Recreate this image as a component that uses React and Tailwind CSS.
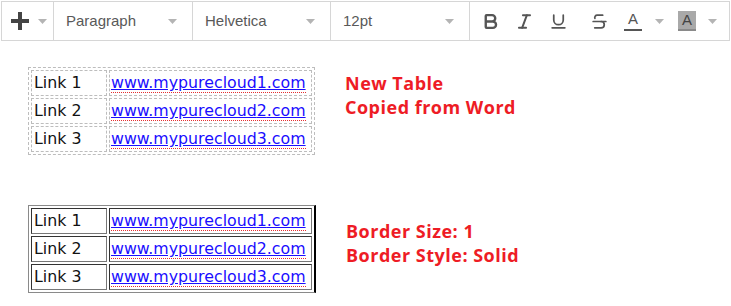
import { Bold, Italic, Underline, Strikethrough } from 'lucide-react';

const rows = [1, 2, 3];

function Caret() {
  return (
    <svg width="9" height="5" viewBox="0 0 9 5" className="shrink-0">
      <path d="M0 0h9L4.5 5z" fill="#b4b4b4" />
    </svg>
  );
}

function Select({ label, width }) {
  return (
    <div className={`flex items-center justify-between border-r border-[#d6d6d6] pl-3 pr-[15px] ${width}`}>
      <span className="text-[15px] text-[#595959]">{label}</span>
      <Caret />
    </div>
  );
}

function LinkTable({ solid }) {
  const tableCls = solid
    ? 'border border-t-[#8a8a8a] border-l-[#8a8a8a] border-b-[#8a8a8a] border-r-black border-r-2'
    : 'border border-dashed border-[#bdbdbd]';
  const cellCls = solid
    ? 'border border-t-[#333] border-l-[#333] border-r-[#777] border-b-[#777]'
    : 'border border-dashed border-[#bdbdbd]';
  return (
    <table className={`border-separate border-spacing-[2px] ${tableCls}`}>
      <tbody>
        {rows.map((n) => (
          <tr key={n}>
            <td className={`h-[26px] w-[76px] px-[2px] py-0 leading-none ${cellCls}`}>Link {n}</td>
            <td className={`h-[26px] w-[203px] px-[1px] py-0 leading-none ${cellCls}`}>
              <span className="border-b border-dotted border-[#e53030] text-[#1a0dff] underline decoration-[#1a0dff]">
                www.mypurecloud{n}.com
              </span>
            </td>
          </tr>
        ))}
      </tbody>
    </table>
  );
}

export default function App() {
  return (
    <div className="w-[731px] h-[306px] bg-white overflow-hidden" style={{ fontFamily: 'Arial, "Liberation Sans", sans-serif' }}>
      {/* toolbar */}
      <div className="ml-px mt-px flex h-[40px] w-[729px] border border-[#d6d6d6] bg-white">
        <div className="flex w-[52px] items-center gap-[9px] border-r border-[#d6d6d6] pl-[9px]">
          <svg width="18" height="18" viewBox="0 0 18 18">
            <path d="M7 0h4v7h7v4h-7v7H7v-7H0V7h7z" fill="#444" />
          </svg>
          <Caret />
        </div>
        <Select label="Paragraph" width="w-[139px]" />
        <Select label="Helvetica" width="w-[138px]" />
        <Select label="12pt" width="w-[139px]" />
        <div className="flex flex-1 items-center pl-[11px] text-[#555]">
          <Bold size={19} strokeWidth={3} className="mr-[15px]" />
          <Italic size={19} strokeWidth={2.5} className="mr-[15px]" />
          <Underline size={19} strokeWidth={2.2} className="mr-[22px]" />
          <Strikethrough size={19} strokeWidth={2.2} className="mr-[15px]" />
          <div className="mr-[13px] flex flex-col items-center">
            <span className="text-[15px] leading-[16px]">A</span>
            <span className="mt-[2px] h-[2px] w-[18px] bg-[#555]" />
          </div>
          <Caret />
          <div className="ml-[14px] mr-[12px] flex flex-col items-center">
            <span className="w-[18px] bg-[#a9a9a9] text-center text-[15px] leading-[18px] text-[#444]">A</span>
            <span className="h-[2px] w-[18px] bg-[#8a8a8a]" />
          </div>
          <Caret />
        </div>
      </div>
      {/* content */}
      <div className="pl-[28px] text-[15.8px] text-[#111]" style={{ fontFamily: '"DejaVu Sans", sans-serif' }}>
        <div className="mt-[26px] flex">
          <LinkTable />
          <div className="ml-[30px] mt-[4px] text-[18px] font-bold leading-[24px] tracking-[0.5px] text-[#ee1c25]" style={{ fontFamily: '"Open Sans", sans-serif' }}>
            <div>New Table</div>
            <div>Copied from Word</div>
          </div>
        </div>
        <div className="mt-[50px] flex">
          <LinkTable solid />
          <div className="ml-[30px] mt-[14px] text-[18px] font-bold leading-[24px] tracking-[0.5px] text-[#ee1c25]" style={{ fontFamily: '"Open Sans", sans-serif' }}>
            <div>Border Size: 1</div>
            <div>Border Style: Solid</div>
          </div>
        </div>
      </div>
    </div>
  );
}
